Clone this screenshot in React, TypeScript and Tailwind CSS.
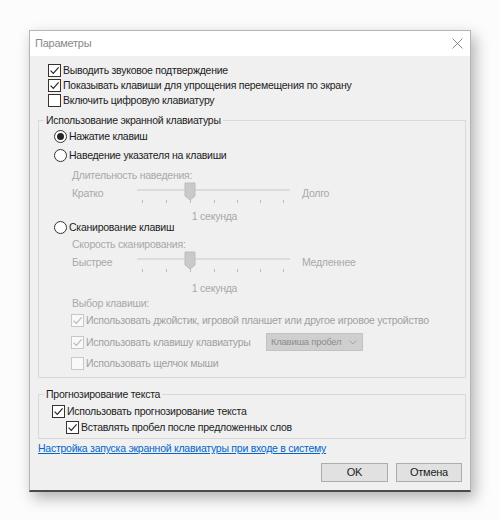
import clsx from "clsx";

function Check({ checked, disabled }: { checked?: boolean; disabled?: boolean }) {
  return (
    <span
      className={clsx(
        "flex h-[13px] w-[13px] shrink-0 items-center justify-center border",
        disabled ? "border-[#c8c8c8] bg-[#f9f9f9]" : "border-[#333333] bg-white"
      )}
    >
      {checked && (
        <svg width="11" height="11" viewBox="0 0 11 11">
          <path
            d="M1.6 5.6 L4.3 8.3 L9.6 2.4"
            fill="none"
            stroke={disabled ? "#b8b8b8" : "#262626"}
            strokeWidth="1.2"
          />
        </svg>
      )}
    </span>
  );
}

function Radio({ on }: { on?: boolean }) {
  return (
    <span className="flex h-[13px] w-[13px] shrink-0 items-center justify-center rounded-full border border-[#333333] bg-white">
      {on && <span className="h-[7px] w-[7px] rounded-full bg-[#262626]" />}
    </span>
  );
}

function Slider() {
  const ticks = [10, 34, 58, 82, 105, 128, 151];
  return (
    <svg width="165" height="22" viewBox="0 0 165 22" className="shrink-0">
      <rect x="5" y="7" width="153" height="2" fill="#dcdcdc" />
      {ticks.map((x) => (
        <rect key={x} x={x} y="18" width="1" height="3" fill="#bdbdbd" />
      ))}
      <path d="M53 1 H63 V14 L58 18 L53 14 Z" fill="#c9c9c9" stroke="#bdbdbd" strokeWidth="1" />
    </svg>
  );
}

function SliderBlock({ title, left, right }: { title: string; left: string; right: string }) {
  return (
    <>
      <div className="flex h-[12px] items-center pl-[18px] text-[#a9a9a9]">{title}</div>
      <div className="mt-[1px] flex h-[22px] items-start pl-[18px] text-[#a9a9a9]">
        <span className="mt-[5px] h-[12px] w-[60px] leading-[12px]">{left}</span>
        <Slider />
        <span className="ml-[5px] mt-[5px] h-[12px] leading-[12px]">{right}</span>
      </div>
    </>
  );
}

export default function App() {
  return (
    <div className="h-[520px] w-[500px] overflow-hidden whitespace-nowrap bg-[#fcfcfc] pl-[29px] pt-[30px] font-['Liberation_Sans',Arial,sans-serif] text-[10.5px] leading-none tracking-[-0.25px] text-[#1c1c1c]">
      <div className="flex h-[462px] w-[442px] flex-col border border-b-2 border-[#b5b5b5] border-b-[#4a4a4a] bg-[#f0f0f0] shadow-[4px_6px_14px_rgba(0,0,0,0.3)]">
        {/* title bar */}
        <div className="flex h-[25px] shrink-0 items-center justify-between bg-white pl-[5px] pr-[7px]">
          <span className="text-[11px] text-[#8a8a8a]">Параметры</span>
          <svg width="11" height="11" viewBox="0 0 11 11">
            <path d="M0.5 0.5 L10.5 10.5 M10.5 0.5 L0.5 10.5" stroke="#8a8a8a" strokeWidth="1" />
          </svg>
        </div>

        {/* top checkboxes */}
        <div className="flex flex-col pl-[18px]">
          <div className="mt-[8px] flex h-[12px] items-center gap-[2px]">
            <Check checked />
            <span>Выводить звуковое подтверждение</span>
          </div>
          <div className="mt-[3px] flex h-[12px] items-center gap-[2px]">
            <Check checked />
            <span>Показывать клавиши для упрощения перемещения по экрану</span>
          </div>
          <div className="mt-[3px] flex h-[12px] items-center gap-[2px]">
            <Check />
            <span>Включить цифровую клавиатуру</span>
          </div>
        </div>

        {/* on-screen keyboard group */}
        <fieldset className="ml-[8px] mr-[4px] mt-[7px] border border-[#d9d9d9]">
          <legend className="ml-[5px] px-[2px] leading-[14px]">Использование экранной клавиатуры</legend>
          <div className="flex flex-col pb-[8px] pl-[15px]">
            <div className="mt-[3px] flex h-[12px] items-center gap-[2px]">
              <Radio on />
              <span>Нажатие клавиш</span>
            </div>
            <div className="mt-[7px] flex h-[12px] items-center gap-[2px]">
              <Radio />
              <span>Наведение указателя на клавиши</span>
            </div>
            <div className="mt-[8px]">
              <SliderBlock title="Длительность наведения:" left="Кратко" right="Долго" />
            </div>
            <div className="mt-[7px] flex h-[10px] items-center pl-[78px] text-[#a9a9a9]">
              <span className="w-[165px] text-center">1 секунда</span>
            </div>
            <div className="flex h-[12px] items-center gap-[2px]">
              <Radio />
              <span>Сканирование клавиш</span>
            </div>
            <div className="mt-[5px]">
              <SliderBlock title="Скорость сканирования:" left="Быстрее" right="Медленнее" />
            </div>
            <div className="mt-[10px] flex h-[10px] items-center pl-[78px] text-[#a9a9a9]">
              <span className="w-[165px] text-center">1 секунда</span>
            </div>
            <div className="mt-[4px] flex h-[12px] items-center pl-[18px] text-[#a9a9a9]">Выбор клавиши:</div>
            <div className="mt-[5px] flex h-[12px] items-center gap-[2px] pl-[17px] text-[#a0a0a0]">
              <Check checked disabled />
              <span>Использовать джойстик, игровой планшет или другое игровое устройство</span>
            </div>
            <div className="mt-[7px] flex h-[18px] items-center gap-[2px] pl-[17px] text-[#a0a0a0]">
              <Check checked disabled />
              <span className="w-[178px]">Использовать клавишу клавиатуры</span>
              <div className="flex h-[18px] w-[97px] items-center justify-between border border-[#c2c2c2] bg-[#cfcfcf] pl-[4px] pr-[5px] text-[9.5px] text-[#8c8c8c]">
                <span>Клавиша пробел</span>
                <svg width="8" height="5" viewBox="0 0 8 5">
                  <path d="M0.5 0.5 L4 4 L7.5 0.5" fill="none" stroke="#a5a5a5" strokeWidth="1" />
                </svg>
              </div>
            </div>
            <div className="mt-[6px] flex h-[12px] items-center gap-[2px] pl-[17px] text-[#a0a0a0]">
              <Check disabled />
              <span>Использовать щелчок мыши</span>
            </div>
          </div>
        </fieldset>

        {/* text prediction group */}
        <fieldset className="ml-[8px] mr-[4px] mt-[9px] border border-[#d9d9d9]">
          <legend className="ml-[5px] px-[2px] leading-[14px]">Прогнозирование текста</legend>
          <div className="flex flex-col pb-[5px] pl-[13px]">
            <div className="mt-[4px] flex h-[12px] items-center gap-[2px]">
              <Check checked />
              <span>Использовать прогнозирование текста</span>
            </div>
            <div className="mt-[4px] flex h-[12px] items-center gap-[2px] pl-[14px]">
              <Check checked />
              <span>Вставлять пробел после предложенных слов</span>
            </div>
          </div>
        </fieldset>

        <a className="ml-[8px] mt-[2px] h-[14px] self-start leading-[14px] text-[#0066cc] underline">
          Настройка запуска экранной клавиатуры при входе в систему
        </a>

        <div className="mt-[8px] flex justify-end gap-[8px] pr-[8px]">
          <button className="h-[19px] w-[67px] border border-[#adadad] bg-[#e1e1e1] text-[11px] text-[#1c1c1c]">OK</button>
          <button className="h-[19px] w-[66px] border border-[#adadad] bg-[#e1e1e1] text-[11px] text-[#1c1c1c]">Отмена</button>
        </div>
      </div>
    </div>
  );
}
